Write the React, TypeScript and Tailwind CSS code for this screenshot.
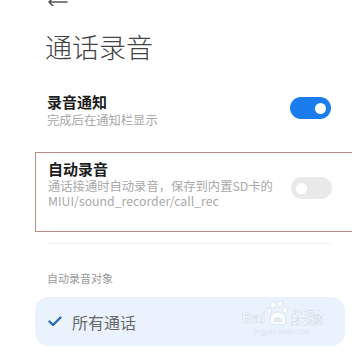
import React from "react";

function Toggle({ on }: { on: boolean }) {
  return (
    <div
      className={`w-[41px] h-[22px] rounded-full flex items-center px-[5px] ${
        on ? "bg-[#1b7cf0] justify-end" : "bg-[#e9e9e9] justify-start"
      }`}
    >
      <div className="w-[11px] h-[11px] rounded-full bg-white"></div>
    </div>
  );
}

function BaiduMark() {
  return (
    <div className="absolute right-[22px] top-[3px] flex flex-col items-center pointer-events-none opacity-80">
      <div className="flex items-end">
        <span className="text-[15px] leading-[18px] font-bold text-white [-webkit-text-stroke:0.6px_#cbd6e4] font-['Liberation_Sans',sans-serif]">
          Bai
        </span>
        <svg width="24" height="27" viewBox="0 0 24 27" className="mx-[1px]">
          <g fill="#ffffff" stroke="#cbd6e4" strokeWidth="0.7">
            <ellipse cx="7" cy="5" rx="2.6" ry="3.2" />
            <ellipse cx="14" cy="4" rx="2.6" ry="3.2" />
            <ellipse cx="3" cy="11" rx="2.4" ry="3" />
            <ellipse cx="19" cy="10" rx="2.4" ry="3" />
            <path d="M4 21 C4 14 9 12 11.5 12 C14 12 20 14 20 21 C20 25 15 25 12 24 C9 25 4 25 4 21 Z" />
          </g>
          <text
            x="12"
            y="22"
            textAnchor="middle"
            fontSize="7"
            fontWeight="bold"
            fill="#cbd6e4"
            fontFamily="Liberation Sans, sans-serif"
          >
            du
          </text>
        </svg>
        <span className="text-[16px] leading-[20px] font-bold text-white [-webkit-text-stroke:0.6px_#cbd6e4] font-['Noto_Sans_CJK_SC',sans-serif]">
          经验
        </span>
      </div>
      <span className="text-[7px] leading-[9px] text-[#d6e0ec] font-['Liberation_Sans',sans-serif]">
        jingyan.baidu.com
      </span>
    </div>
  );
}

export default function App() {
  return (
    <div className="w-[352px] h-[353px] overflow-hidden bg-white font-['Noto_Sans_CJK_SC',sans-serif]">
      {/* back arrow, mostly off the top */}
      <svg
        width="22"
        height="20"
        viewBox="0 0 22 20"
        className="ml-[47px] mt-[-14px] block"
      >
        <path
          d="M2 16 H20 M2 16 L8 10 M2 16 L8 22"
          stroke="#555"
          strokeWidth="1.6"
          fill="none"
          strokeLinecap="round"
        />
      </svg>

      <div className="mt-[25px] pl-[45px] text-[27px] leading-[32px] font-light text-[#444]">
        通话录音
      </div>

      <div className="mt-[29px] pl-[47px] pr-[21px] flex justify-between">
        <div>
          <div className="text-[15px] leading-[20px] font-bold text-[#1c1c1c]">
            录音通知
          </div>
          <div className="text-[12.3px] leading-[16px] text-[#a9a9a9]">
            完成后在通知栏显示
          </div>
        </div>
        <div className="mt-[5px]">
          <Toggle on={true} />
        </div>
      </div>

      <div className="mt-[24px] ml-[35px] w-[350px] border border-[#b98b82] pl-[12px] pt-[5px] pb-[22px]">
        <div className="w-[284px] flex justify-between">
          <div>
            <div className="text-[15px] leading-[21px] font-bold text-[#1c1c1c]">
              自动录音
            </div>
            <div className="whitespace-pre-line text-[12.3px] leading-[15px] text-[#a9a9a9]">
              {"通话接通时自动录音，保存到内置SD卡的\nMIUI/sound_recorder/call_rec"}
            </div>
          </div>
          <div className="mt-[19px]">
            <Toggle on={false} />
          </div>
        </div>
      </div>

      <div className="mt-[11px] ml-[47px] w-[284px] h-px bg-[#f1f1f1]"></div>

      <div className="mt-[26px] pl-[47px] text-[11px] leading-[16px] text-[#9a9a9a]">
        自动录音对象
      </div>

      <div className="relative mt-[11px] ml-[35px] w-[310px] h-[49px] rounded-[14px] bg-[#eaf2fd] flex items-center pl-[13px]">
        <svg width="14" height="11" viewBox="0 0 14 11">
          <path
            d="M1.5 5.5 L5 9 L12.5 1.5"
            stroke="#2c6cae"
            strokeWidth="2.4"
            fill="none"
            strokeLinecap="round"
            strokeLinejoin="round"
          />
        </svg>
        <span className="ml-[10px] text-[16px] leading-[20px] text-[#6a6a6a]">
          所有通话
        </span>
        <BaiduMark />
      </div>
    </div>
  );
}
